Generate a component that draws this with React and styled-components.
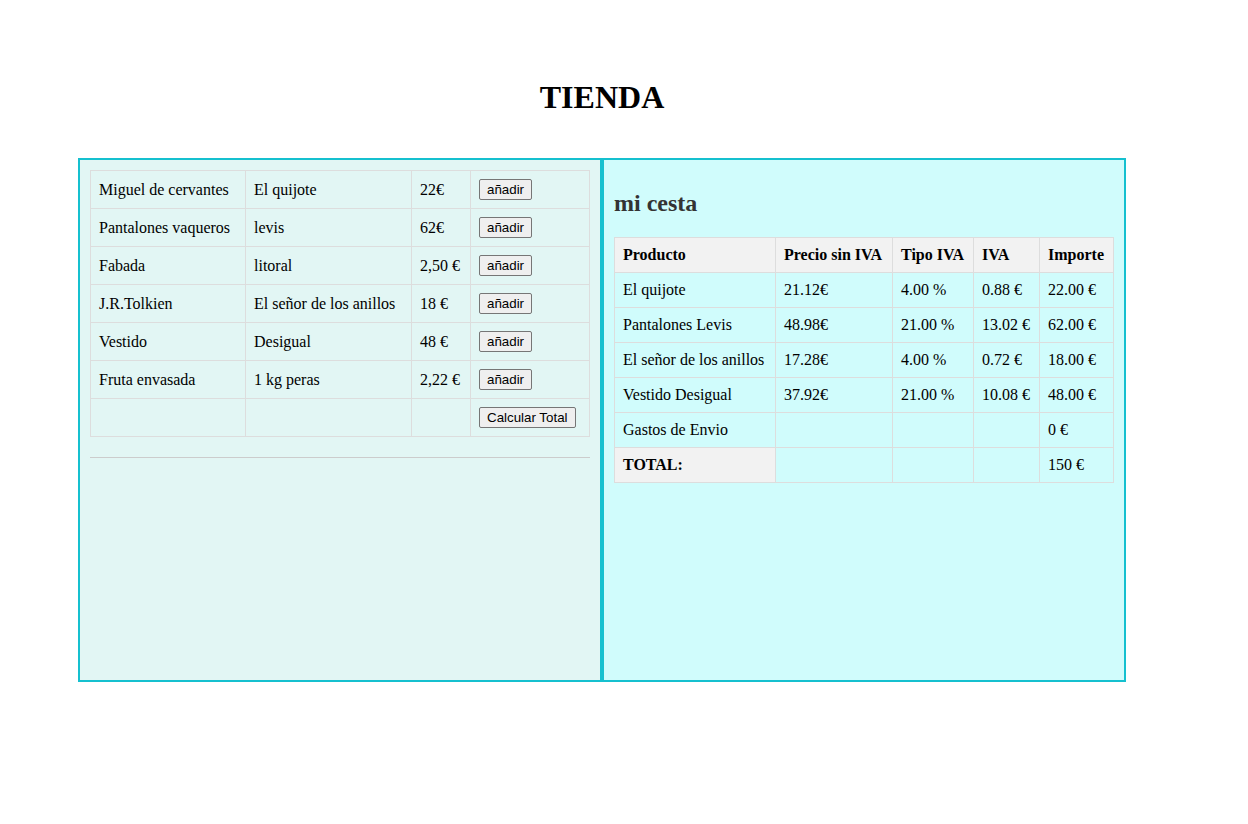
import React from "react";
import styled, { createGlobalStyle } from "styled-components";

const GlobalStyle = createGlobalStyle`
  body {
    margin: 0;
    background: #fff;
    font-family: "Liberation Serif", "Times New Roman", serif;
    color: #000;
  }
`;

const productos = [
  { nombre: "Miguel de cervantes", marca: "El quijote", precio: "22€" },
  { nombre: "Pantalones vaqueros", marca: "levis", precio: "62€" },
  { nombre: "Fabada", marca: "litoral", precio: "2,50 €" },
  { nombre: "J.R.Tolkien", marca: "El señor de los anillos", precio: "18 €" },
  { nombre: "Vestido", marca: "Desigual", precio: "48 €" },
  { nombre: "Fruta envasada", marca: "1 kg peras", precio: "2,22 €" },
];

const cesta = [
  { producto: "El quijote", sinIva: "21.12€", tipo: "4.00 %", iva: "0.88 €", importe: "22.00 €" },
  { producto: "Pantalones Levis", sinIva: "48.98€", tipo: "21.00 %", iva: "13.02 €", importe: "62.00 €" },
  { producto: "El señor de los anillos", sinIva: "17.28€", tipo: "4.00 %", iva: "0.72 €", importe: "18.00 €" },
  { producto: "Vestido Desigual", sinIva: "37.92€", tipo: "21.00 %", iva: "10.08 €", importe: "48.00 €" },
];

const App = () => {
  return (
    <Page>
      <GlobalStyle />
      <Title>TIENDA</Title>
      <Panels>
        <Panel $bg="#e2f6f4">
          <Table>
            <colgroup>
              <col style={{ width: 155 }} />
              <col style={{ width: 166 }} />
              <col style={{ width: 59 }} />
              <col style={{ width: 119 }} />
            </colgroup>
            <tbody>
              {productos.map((p, i) => (
                <tr key={i}>
                  <Td>{p.nombre}</Td>
                  <Td>{p.marca}</Td>
                  <Td>{p.precio}</Td>
                  <Td>
                    <Button>añadir</Button>
                  </Td>
                </tr>
              ))}
              <tr>
                <Td />
                <Td />
                <Td />
                <Td>
                  <Button>Calcular Total</Button>
                </Td>
              </tr>
            </tbody>
          </Table>
          <Rule />
        </Panel>

        <Panel $bg="#d0fcfc">
          <Subtitle>mi cesta</Subtitle>
          <Table>
            <colgroup>
              <col style={{ width: 161 }} />
              <col style={{ width: 117 }} />
              <col style={{ width: 81 }} />
              <col style={{ width: 66 }} />
              <col style={{ width: 74 }} />
            </colgroup>
            <thead>
              <tr>
                <Th>Producto</Th>
                <Th>Precio sin IVA</Th>
                <Th>Tipo IVA</Th>
                <Th>IVA</Th>
                <Th>Importe</Th>
              </tr>
            </thead>
            <tbody>
              {cesta.map((c, i) => (
                <tr key={i}>
                  <Td>{c.producto}</Td>
                  <Td>{c.sinIva}</Td>
                  <Td>{c.tipo}</Td>
                  <Td>{c.iva}</Td>
                  <Td>{c.importe}</Td>
                </tr>
              ))}
              <tr>
                <Td>Gastos de Envio</Td>
                <Td />
                <Td />
                <Td />
                <Td>0 €</Td>
              </tr>
              <tr>
                <Th>TOTAL:</Th>
                <Td />
                <Td />
                <Td />
                <Td>150 €</Td>
              </tr>
            </tbody>
          </Table>
        </Panel>
      </Panels>
    </Page>
  );
};

export default App;

const Page = styled.div`
  width: 1048px;
  margin-left: 78px;
  padding-top: 79px;
`;

const Title = styled.h1`
  margin: 0 0 42px;
  text-align: center;
  font-size: 32px;
  font-weight: bold;
`;

const Panels = styled.div`
  display: flex;
`;

const Panel = styled.div`
  width: 524px;
  height: 524px;
  box-sizing: border-box;
  padding: 10px;
  border: 2px solid #15c0cf;
  background: ${(p) => p.$bg};
`;

const Subtitle = styled.h2`
  margin: 20px 0;
  font-size: 24px;
  color: #333;
`;

const Table = styled.table`
  width: ${(p) => p.$width || "100%"};
  border-collapse: collapse;
  table-layout: fixed;
  font-size: 16px;
`;

const Td = styled.td`
  border: 1px solid #ddd;
  padding: 8px;
  text-align: left;
  vertical-align: middle;
  white-space: nowrap;
`;

const Th = styled.th`
  border: 1px solid #ddd;
  padding: 8px;
  text-align: left;
  white-space: nowrap;
  background: #f2f2f2;
`;

const Button = styled.button`
  display: inline-block;
  vertical-align: top;
  height: 21px;
  font-family: "Liberation Sans", Arial, sans-serif;
  font-size: 13.33px;
  line-height: 15px;
  padding: 2px 7px;
  border: 1px solid #767676;
  border-radius: 2px;
  background: #efefef;
  color: #000;
`;

const Rule = styled.hr`
  margin: 20px 0 0;
  border: none;
  border-top: 1px solid #ccc;
  height: 0;
`;
